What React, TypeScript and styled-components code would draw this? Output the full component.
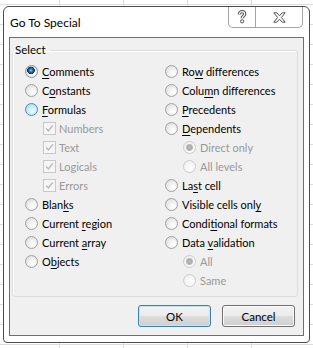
import React from "react";
import styled, { createGlobalStyle, css } from "styled-components";

type Mark = "off" | "on" | "hover" | "disabled" | "disabledOn" | "check";

type Option = {
  label: string;
  mark: Mark;
  key?: number;
  sub?: boolean;
};

const leftOptions: Option[] = [
  { label: "Comments", mark: "on", key: 0 },
  { label: "Constants", mark: "off", key: 1 },
  { label: "Formulas", mark: "hover", key: 0 },
  { label: "Numbers", mark: "check", sub: true },
  { label: "Text", mark: "check", sub: true },
  { label: "Logicals", mark: "check", sub: true },
  { label: "Errors", mark: "check", sub: true },
  { label: "Blanks", mark: "off", key: 4 },
  { label: "Current region", mark: "off", key: 8 },
  { label: "Current array", mark: "off", key: 8 },
  { label: "Objects", mark: "off", key: 1 },
];

const rightOptions: Option[] = [
  { label: "Row differences", mark: "off", key: 2 },
  { label: "Column differences", mark: "off", key: 4 },
  { label: "Precedents", mark: "off", key: 0 },
  { label: "Dependents", mark: "off", key: 0 },
  { label: "Direct only", mark: "disabledOn", sub: true },
  { label: "All levels", mark: "disabled", sub: true },
  { label: "Last cell", mark: "off", key: 2 },
  { label: "Visible cells only", mark: "off", key: 17 },
  { label: "Conditional formats", mark: "off", key: 5 },
  { label: "Data validation", mark: "off", key: 5 },
  { label: "All", mark: "disabledOn", sub: true },
  { label: "Same", mark: "disabled", sub: true },
];

const isDisabled = (m: Mark) => m === "disabled" || m === "disabledOn" || m === "check";

const renderLabel = (o: Option) => {
  if (o.key === undefined) return o.label;
  return (
    <>
      {o.label.slice(0, o.key)}
      <Key>{o.label[o.key]}</Key>
      {o.label.slice(o.key + 1)}
    </>
  );
};

const OptionRow = ({ option }: { option: Option }) => (
  <Row $sub={!!option.sub} $disabled={isDisabled(option.mark)}>
    {option.mark === "check" ? (
      <CheckBox>
        <svg width="11" height="11" viewBox="0 0 11 11">
          <path d="M2.2 5.6 L4.4 7.9 L8.8 2.4" fill="none" stroke="#b8b8b8" strokeWidth="1.4" />
        </svg>
      </CheckBox>
    ) : (
      <Radio $mark={option.mark} />
    )}
    <span>{renderLabel(option)}</span>
  </Row>
);

export default function App() {
  return (
    <>
      <GlobalStyle />
      <Desktop>
        <Window>
          <TitleBar>
            <Title>Go To Special</Title>
            <CaptionButtons>
              <HelpButton>
                <svg width="10" height="14" viewBox="0 0 10 14">
                  <path
                    d="M2.3 4.4 C2.3 2.5 3.6 1.7 5 1.7 C6.5 1.7 7.7 2.6 7.7 4 C7.7 5.8 5.1 6.2 5.1 8.3"
                    fill="none"
                    stroke="#505050"
                    strokeWidth="3.2"
                  />
                  <path
                    d="M2.3 4.4 C2.3 2.5 3.6 1.7 5 1.7 C6.5 1.7 7.7 2.6 7.7 4 C7.7 5.8 5.1 6.2 5.1 8.3"
                    fill="none"
                    stroke="#ffffff"
                    strokeWidth="1.2"
                  />
                  <circle cx="5.1" cy="11.3" r="1.6" fill="#ffffff" stroke="#505050" strokeWidth="1" />
                </svg>
              </HelpButton>
              <CloseButton>
                <svg width="13" height="11" viewBox="0 0 13 11">
                  <polygon
                    points="0.8,0.8 3.8,0.8 6.5,3.8 9.2,0.8 12.2,0.8 8.4,5.5 12.2,10.2 9.2,10.2 6.5,7.2 3.8,10.2 0.8,10.2 4.6,5.5"
                    fill="#ffffff"
                    stroke="#505050"
                    strokeWidth="1"
                    strokeLinejoin="round"
                  />
                </svg>
              </CloseButton>
            </CaptionButtons>
          </TitleBar>
          <Client>
            <GroupBox>
              <Legend>Select</Legend>
              <Columns>
                <Column>
                  {leftOptions.map((o) => (
                    <OptionRow key={o.label} option={o} />
                  ))}
                </Column>
                <Column>
                  {rightOptions.map((o) => (
                    <OptionRow key={o.label} option={o} />
                  ))}
                </Column>
              </Columns>
            </GroupBox>
            <ButtonBar>
              <Button $default>OK</Button>
              <Button>Cancel</Button>
            </ButtonBar>
          </Client>
        </Window>
      </Desktop>
    </>
  );
}

const GlobalStyle = createGlobalStyle`
  html, body {
    margin: 0;
    padding: 0;
  }
  body {
    font-family: Lato, "Liberation Sans", sans-serif;
    font-size: 11px;
    color: #000000;
  }
`;

const Desktop = styled.div`
  box-sizing: border-box;
  width: 313px;
  height: 348px;
  padding: 6px 3px 0 3px;
  background-color: #ffffff;
  background-image:
    repeating-linear-gradient(90deg, transparent 0 59px, #dadcdd 59px 60px, transparent 60px 64px),
    repeating-linear-gradient(180deg, transparent 0 4px, #dadcdd 4px 5px, transparent 5px 20px);
  overflow: hidden;
`;

const Window = styled.div`
  box-sizing: border-box;
  width: 307px;
  height: 337px;
  display: flex;
  flex-direction: column;
  background: #ffffff;
  border: 1px solid #4d4d4d;
  border-radius: 6px 6px 4px 4px;
`;

const TitleBar = styled.div`
  height: 30px;
  display: flex;
  justify-content: space-between;
  align-items: flex-start;
  flex-shrink: 0;
`;

const Title = styled.div`
  padding: 8px 0 0 6px;
  font-size: 12px;
  line-height: 15px;
  color: #000000;
`;

const CaptionButtons = styled.div`
  display: flex;
  margin-right: 6px;
  height: 20px;
  border: 1px solid #a4a4a4;
  border-top: none;
  border-radius: 0 0 5px 5px;
  background: #ffffff;
  overflow: hidden;
`;

const CaptionButton = styled.div`
  display: flex;
  align-items: center;
  justify-content: center;
  height: 100%;
`;

const HelpButton = styled(CaptionButton)`
  width: 26px;
  border-right: 1px solid #a4a4a4;
`;

const CloseButton = styled(CaptionButton)`
  width: 46px;
`;

const Client = styled.div`
  flex: 1;
  display: flex;
  flex-direction: column;
  margin: 0 5px 6px 5px;
  border: 1px solid #6f6f6f;
  background: #f0f0f0;
`;

const GroupBox = styled.fieldset`
  margin: 5px 5px 0 2px;
  padding: 0 0 6px 0;
  border: 1px solid #dcdcdc;
  border-radius: 3px;
  box-shadow: inset 1px 1px 0 #ffffff;
  min-width: 0;
`;

const Legend = styled.legend`
  margin-left: 0;
  padding: 0 5px 0 2px;
  line-height: 14px;
  font-size: 11.5px;
`;

const Columns = styled.div`
  display: grid;
  grid-template-columns: 140px 1fr;
  padding: 5px 0 0 12px;
`;

const Column = styled.div`
  display: flex;
  flex-direction: column;
`;

const Row = styled.div<{ $sub: boolean; $disabled: boolean }>`
  display: flex;
  align-items: center;
  gap: 4px;
  height: 19px;
  padding-left: ${(p) => (p.$sub ? 18 : 0)}px;
  color: ${(p) => (p.$disabled ? "#999999" : "#000000")};
  white-space: nowrap;
`;

const Key = styled.span`
  text-decoration: underline;
  text-underline-offset: 2px;
`;

const radioLooks: Record<string, ReturnType<typeof css>> = {
  off: css`
    border-color: #a0a0a0;
    background: radial-gradient(circle at 65% 70%, #ffffff 0%, #f4f4f4 35%, #d6d6d6 100%);
  `,
  on: css`
    border-color: #7890a6;
    background:
      radial-gradient(circle at 45% 40%, #9fd0f2 0, #3b7fbd 1.4px, #173f66 3px, #0d2844 3.6px, transparent 4px),
      radial-gradient(circle at 65% 70%, #ffffff 0%, #f4f4f4 35%, #d6d6d6 100%);
  `,
  hover: css`
    border-color: #4a8bbd;
    background: radial-gradient(circle at 60% 65%, #eef9fe 0%, #cdedfb 45%, #95d1ef 100%);
  `,
  disabled: css`
    border-color: #cccccc;
    background: radial-gradient(circle at 65% 70%, #ffffff 0%, #f7f7f7 40%, #e8e8e8 100%);
  `,
  disabledOn: css`
    border-color: #cccccc;
    background:
      radial-gradient(circle, #bcbcbc 0, #acacac 2.4px, #c8c8c8 3.4px, transparent 3.9px),
      radial-gradient(circle at 65% 70%, #ffffff 0%, #f7f7f7 40%, #e8e8e8 100%);
  `,
};

const Radio = styled.span<{ $mark: Mark }>`
  box-sizing: border-box;
  width: 13px;
  height: 13px;
  flex-shrink: 0;
  border-radius: 50%;
  border: 1px solid;
  ${(p) => radioLooks[p.$mark]}
`;

const CheckBox = styled.span`
  box-sizing: border-box;
  width: 13px;
  height: 13px;
  flex-shrink: 0;
  margin-right: -1px;
  display: flex;
  align-items: center;
  justify-content: center;
  border: 1px solid #c8c8c8;
  background: #f6f6f6;
`;

const ButtonBar = styled.div`
  display: flex;
  justify-content: flex-end;
  gap: 11px;
  margin-top: 8px;
  padding-right: 8px;
`;

const Button = styled.div<{ $default?: boolean }>`
  box-sizing: border-box;
  width: 73px;
  height: 22px;
  display: flex;
  align-items: center;
  justify-content: center;
  border-radius: 3px;
  border: 1px solid ${(p) => (p.$default ? "#3c7fb1" : "#707070")};
  box-shadow: inset 0 0 0 1px ${(p) => (p.$default ? "#c4e5f6" : "#fbfbfb")};
  background: linear-gradient(180deg, #f2f2f2 0%, #ebebeb 50%, #dddddd 51%, #cfcfcf 100%);
  font-size: 11.5px;
  color: #000000;
`;
